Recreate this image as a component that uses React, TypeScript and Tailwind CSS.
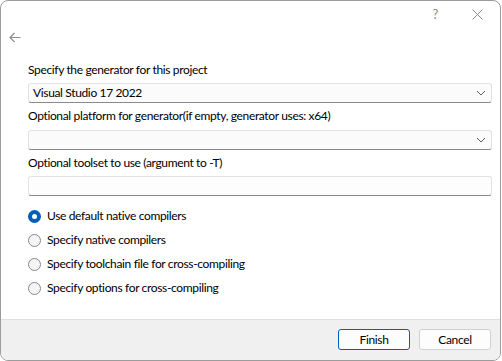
import React from "react";

const font = "font-['Segoe_UI','Lato','Liberation_Sans',sans-serif]";

const Chevron = () => (
  <svg width="10" height="6" viewBox="0 0 10 6" className="text-[#5d5d5d]">
    <path d="M1 1 L5 5 L9 1" fill="none" stroke="currentColor" strokeWidth="1" />
  </svg>
);

const Combo = ({ value }: { value?: string }) => (
  <div className="h-[20px] flex items-center justify-between bg-[#fbfbfb] border border-[#e3e3e3] border-b-[#8a8a8a] rounded-[3px] pl-[4px] pr-[5px]">
    <span className="leading-none">{value}</span>
    <Chevron />
  </div>
);

const Radio = ({ label, checked }: { label: string; checked?: boolean }) => (
  <div className="h-[24px] flex items-center gap-[6px]">
    {checked ? (
      <span className="w-[13px] h-[13px] rounded-full bg-[#005fb8] flex items-center justify-center">
        <span className="w-[5px] h-[5px] rounded-full bg-white" />
      </span>
    ) : (
      <span className="w-[13px] h-[13px] rounded-full border border-[#8a8a8a] bg-[#f4f4f4]" />
    )}
    <span>{label}</span>
  </div>
);

export default function App() {
  return (
    <div className={`w-[502px] h-[361px] bg-white text-[12px] tracking-[-0.35px] text-black ${font}`}>
      <div className="w-[501px] h-[361px] border border-[#9c9c9c] rounded-[8px] overflow-hidden flex flex-col">
        {/* title bar */}
        <div className="h-[27px] flex items-center justify-end text-[#8a8a8a]">
          <span className="text-[13px] mr-[34px]">?</span>
          <svg width="11" height="11" viewBox="0 0 11 11" className="mr-[17px]">
            <path d="M0.5 0.5 L10.5 10.5 M10.5 0.5 L0.5 10.5" stroke="currentColor" strokeWidth="1" />
          </svg>
        </div>
        {/* back arrow */}
        <div className="h-[18px] pl-[8px] flex items-center text-[#8f8f8f]">
          <svg width="12" height="11" viewBox="0 0 12 11">
            <path d="M11.5 5.5 H1 M5.5 1 L1 5.5 L5.5 10" fill="none" stroke="currentColor" strokeWidth="1.2" />
          </svg>
        </div>

        <div className="flex-1 pl-[27px] pr-[8px] pt-[16px] flex flex-col">
          <div className="h-[16px] leading-[16px]">Specify the generator for this project</div>
          <div className="mt-[5px]">
            <Combo value="Visual Studio 17 2022" />
          </div>
          <div className="mt-[5px] h-[16px] leading-[16px]">Optional platform for generator(if empty, generator uses: x64)</div>
          <div className="mt-[6px]">
            <Combo />
          </div>
          <div className="mt-[5px] h-[16px] leading-[16px]">Optional toolset to use (argument to -T)</div>
          <div className="mt-[5px] h-[20px] bg-[#fdfdfd] border border-[#e3e3e3] border-b-[#8a8a8a] rounded-[3px]" />

          <div className="mt-[8px] flex flex-col">
            <Radio label="Use default native compilers" checked />
            <Radio label="Specify native compilers" />
            <Radio label="Specify toolchain file for cross-compiling" />
            <Radio label="Specify options for cross-compiling" />
          </div>
        </div>

        {/* footer */}
        <div className="h-[41px] bg-[#f0f0f0] border-t border-[#dfdfdf] flex items-center justify-end gap-[9px] pr-[9px] pb-[1px]">
          <button className="w-[72px] h-[21px] bg-[#fdfdfd] border border-[#005fb8] rounded-[3px] leading-none">
            Finish
          </button>
          <button className="w-[72px] h-[21px] bg-[#fdfdfd] border border-[#d0d0d0] rounded-[3px] leading-none">
            Cancel
          </button>
        </div>
      </div>
    </div>
  );
}
